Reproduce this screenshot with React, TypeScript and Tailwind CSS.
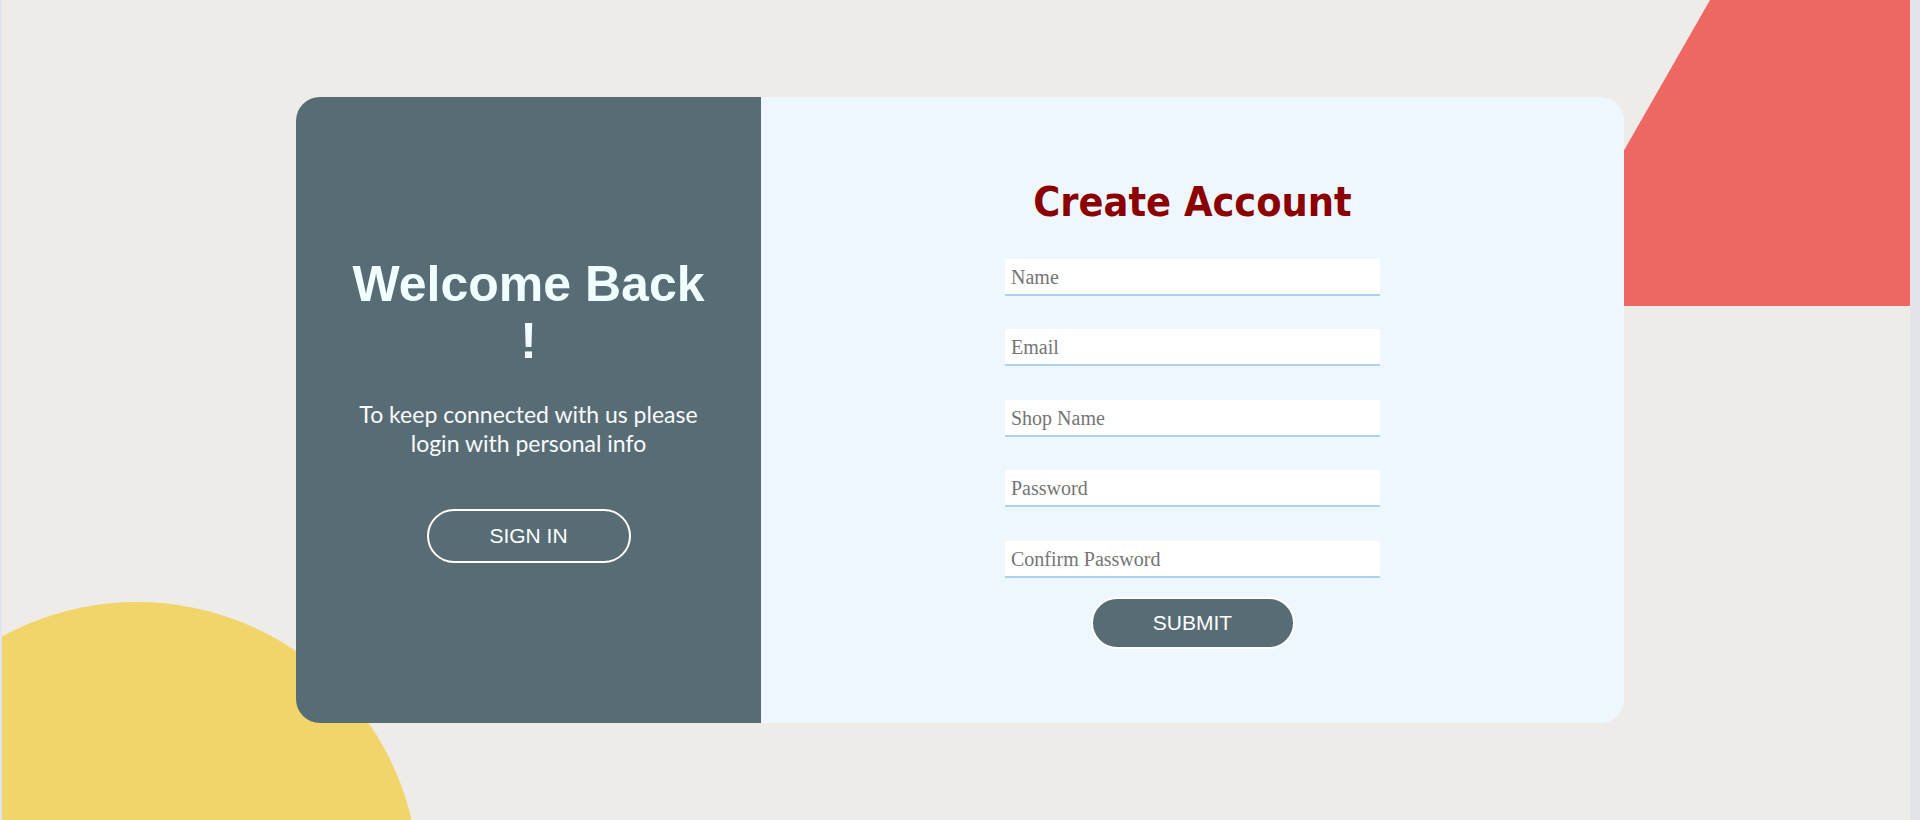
import React from 'react';

const fields = ['Name', 'Email', 'Shop Name', 'Password', 'Confirm Password'];

export default function App() {
  return (
    <div className="flex h-[820px] w-full overflow-hidden bg-[#e3e5eb]">
      <div className="w-[2px] shrink-0 bg-[#e1e5ee]" />
      <main className="relative flex flex-1 items-start overflow-hidden bg-[#edece8]">
        {/* decorative shapes */}
        <div className="absolute left-[-147px] top-[602px] h-[564px] w-[564px] rounded-full bg-[#f2d56a]" />
        <svg className="absolute left-[1533px] top-0" width="376" height="306" viewBox="0 0 376 306">
          <polygon points="175,0 376,0 376,306 0,306" fill="#ee6763" />
        </svg>

        <div className="relative ml-[294px] mt-[97px] flex h-[626px] w-[1328px] overflow-hidden rounded-[24px]">
          <section className="flex w-[465px] flex-col items-center justify-center bg-[#586c75] px-[48px] pb-[2px] text-center">
            <h1 className="font-['Liberation_Sans',Arial,sans-serif] text-[50px] font-bold leading-[57px] text-[#f0ffff]">
              Welcome Back !
            </h1>
            <p className="mt-[30px] font-['Lato','Open_Sans',sans-serif] text-[23px] leading-[29px] text-[#f8fbfc]">
              To keep connected with us please
              <br />
              login with personal info
            </p>
            <button className="mt-[51px] h-[54px] w-[204px] rounded-full border-2 border-white font-['Liberation_Sans',Arial,sans-serif] text-[21px] text-white">
              SIGN IN
            </button>
          </section>

          <section className="flex flex-1 flex-col items-center justify-center bg-[#eff7fe] pt-[6px]">
            <h2 className="font-['DejaVu_Sans_Condensed','DejaVu_Sans',sans-serif] text-[41px] font-bold leading-[48px] text-[#8b0000]">
              Create Account
            </h2>
            <form className="mt-[33px] flex flex-col items-center gap-[33.5px]" onSubmit={(e) => e.preventDefault()}>
              {fields.map((f) => (
                <input
                  key={f}
                  type="text"
                  placeholder={f}
                  className="h-[37px] w-[375px] border-b-2 border-[#acd2f2] bg-white px-[6px] pt-[2px] font-['Liberation_Serif','Times_New_Roman',serif] text-[20px] text-[#444] outline-none placeholder:text-[#757575]"
                />
              ))}
            </form>
            <button className="mt-[19px] h-[52px] w-[204px] rounded-full border-2 border-white bg-[#586c75] font-['Liberation_Sans',Arial,sans-serif] text-[21px] text-white">
              SUBMIT
            </button>
          </section>
        </div>
      </main>
      <div className="w-[10px] shrink-0 bg-[#e3e4ea]" />
    </div>
  );
}
